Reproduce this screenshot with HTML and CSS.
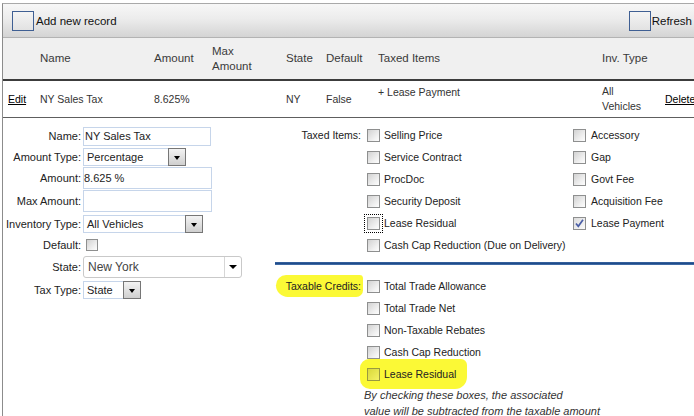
FILE: index.html
```html
<!DOCTYPE html>
<html>
<head>
<meta charset="utf-8">
<title>Taxes</title>
<link rel="stylesheet" href="styles.css">
</head>
<body>
<div class="frame">
  <div class="toolbar">
    <div class="tool"><span class="tool-icon"></span><span class="tool-text">Add new record</span></div>
    <div class="tool tool-right"><span class="tool-icon"></span><span class="tool-text">Refresh</span></div>
  </div>

  <div class="row head">
    <div></div>
    <div>Name</div>
    <div>Amount</div>
    <div>Max<br>Amount</div>
    <div>State</div>
    <div>Default</div>
    <div>Taxed Items</div>
    <div>Inv. Type</div>
    <div></div>
  </div>

  <div class="row data">
    <div class="cell-edit"><a class="link">Edit</a></div>
    <div>NY Sales Tax</div>
    <div>8.625%</div>
    <div></div>
    <div>NY</div>
    <div>False</div>
    <div class="cell-top">+ Lease Payment</div>
    <div>All<br>Vehicles</div>
    <div><a class="link">Delete</a></div>
  </div>

  <div class="form">
    <div class="left">
      <div class="f-label r1">Name:</div>
      <div class="f-field r1"><div class="input in-name">NY Sales Tax</div></div>

      <div class="f-label r2">Amount Type:</div>
      <div class="f-field r2"><div class="select sel-amt"><span class="select-text">Percentage</span><span class="select-btn"><span class="arrow"></span></span></div></div>

      <div class="f-label r3">Amount:</div>
      <div class="f-field r3"><div class="input in-wide in-flush">8.625 %</div></div>

      <div class="f-label r4">Max Amount:</div>
      <div class="f-field r4"><div class="input in-wide"></div></div>

      <div class="f-label r5">Inventory Type:</div>
      <div class="f-field r5"><div class="select sel-inv"><span class="select-text">All Vehicles</span><span class="select-btn"><span class="arrow"></span></span></div></div>

      <div class="f-label r6">Default:</div>
      <div class="f-field r6"><span class="cb cb-default"></span></div>

      <div class="f-label r7">State:</div>
      <div class="f-field r7"><div class="combo"><span class="combo-text">New York</span><span class="combo-btn"><span class="arrow arrow-lg"></span></span></div></div>

      <div class="f-label r8">Tax Type:</div>
      <div class="f-field r8"><div class="select sel-tax"><span class="select-text">State</span><span class="select-btn"><span class="arrow"></span></span></div></div>
    </div>

    <div class="right">
      <div class="section taxed">
        <div class="sec-label">Taxed Items:</div>
        <div class="checks">
          <div class="check"><span class="cb"></span><span>Selling Price</span></div>
          <div class="check"><span class="cb"></span><span>Service Contract</span></div>
          <div class="check"><span class="cb"></span><span>ProcDoc</span></div>
          <div class="check"><span class="cb"></span><span>Security Deposit</span></div>
          <div class="check"><span class="cb cb-focus"></span><span>Lease Residual</span></div>
          <div class="check"><span class="cb"></span><span>Cash Cap Reduction (Due on Delivery)</span></div>
        </div>
        <div class="checks checks-2">
          <div class="check"><span class="cb"></span><span>Accessory</span></div>
          <div class="check"><span class="cb"></span><span>Gap</span></div>
          <div class="check"><span class="cb"></span><span>Govt Fee</span></div>
          <div class="check"><span class="cb"></span><span>Acquisition Fee</span></div>
          <div class="check"><span class="cb cb-checked"><svg width="11" height="11" viewBox="0 0 11 11"><path d="M2 5.5 L4.3 8.3 L9 1.8" fill="none" stroke="#4a5ea6" stroke-width="1.7"/></svg></span><span>Lease Payment</span></div>
        </div>
      </div>

      <div class="divider"></div>

      <div class="section credits">
        <div class="sec-label"><span class="hl-label">Taxable Credits:</span></div>
        <div class="checks">
          <div class="check"><span class="cb"></span><span>Total Trade Allowance</span></div>
          <div class="check"><span class="cb"></span><span>Total Trade Net</span></div>
          <div class="check"><span class="cb"></span><span>Non-Taxable Rebates</span></div>
          <div class="check"><span class="cb"></span><span>Cash Cap Reduction</span></div>
          <div class="check hl-check"><span class="cb cb-hl"></span><span>Lease Residual</span></div>
          <div class="note">By checking these boxes, the associated<br>value will be subtracted from the taxable amount</div>
        </div>
      </div>
    </div>
  </div>
</div>
</body>
</html>
```

FILE: styles.css
```css
html, body {
  margin: 0;
  padding: 0;
  background: #fff;
}

body {
  width: 694px;
  height: 416px;
  overflow: hidden;
  font-family: "Liberation Sans", Arial, sans-serif;
  color: #222;
}

.frame {
  margin: 3px 0 0 2px;
  border-top: 1px solid #a9a9a9;
  border-left: 1px solid #8c8c8c;
  height: 413px;
  box-sizing: border-box;
}

/* toolbar */
.toolbar {
  height: 33px;
  border-bottom: 1px solid #b3b3b3;
  background: linear-gradient(#f7f7f7, #ececec 45%, #d4d4d4);
  display: flex;
  justify-content: space-between;
  align-items: center;
  padding: 0 2px 0 9px;
}

.tool {
  display: flex;
  align-items: center;
  gap: 2px;
}

.tool-right {
  gap: 1px;
}

.tool-icon {
  width: 20px;
  height: 18px;
  border: 1px solid #3f5f93;
  background: linear-gradient(#f4f4f4, #e2e2e2);
}

.tool-text {
  font-size: 11.5px;
  color: #111;
}

/* grid rows */
.row {
  display: grid;
  grid-template-columns: 37px 114px 58px 74px 40px 52px 224px 63px 1fr;
  align-items: center;
}

.head {
  height: 41px;
  background: #f0f0f0;
  border-bottom: 2px solid #3c3c3c;
  font-size: 11.5px;
  line-height: 15px;
  color: #3a3a3a;
}

.data {
  height: 36px;
  border-bottom: 1px solid #5e5e5e;
  font-size: 10.5px;
  line-height: 15px;
  color: #333;
}

.cell-edit {
  padding-left: 5px;
}

.cell-top {
  align-self: start;
  padding-top: 4px;
}

.link {
  color: #000;
  text-decoration: underline;
}

/* form */
.form {
  display: flex;
  font-size: 10.5px;
  color: #222;
}

.left {
  width: 272px;
  padding-top: 8px;
  display: grid;
  grid-template-columns: 78px 1fr;
  column-gap: 2px;
  grid-template-rows: 20px 21px 22px 24px 22px 20px 24px 22px;
  align-items: center;
}

.f-label {
  text-align: right;
  font-size: 11px;
}

.f-field {
  display: flex;
  align-items: center;
}

.input {
  box-sizing: border-box;
  border: 1px solid #c6d5ea;
  background: #fff;
  padding-left: 1px;
  display: flex;
  align-items: center;
  color: #222;
  font-size: 11px;
}

.in-name {
  width: 128px;
  height: 19px;
}

.in-wide {
  width: 129px;
  height: 22px;
}

.in-flush {
  padding-left: 0;
}

.select {
  display: flex;
  height: 18px;
  box-sizing: border-box;
  font-size: 11px;
}

.sel-amt { width: 103px; }
.sel-inv { width: 120px; }
.sel-tax { width: 58px; }

.select-text {
  flex: 1;
  box-sizing: border-box;
  border: 1px solid #c6d5ea;
  border-right: 0;
  padding-left: 3px;
  line-height: 16px;
  color: #222;
}

.select-btn {
  width: 18px;
  box-sizing: border-box;
  border: 1px solid #767676;
  background: linear-gradient(#f3f3f3, #cfcfcf);
  display: flex;
  align-items: center;
  justify-content: center;
}

.arrow {
  width: 0;
  height: 0;
  border-left: 3.5px solid transparent;
  border-right: 3.5px solid transparent;
  border-top: 4px solid #000;
  margin-top: 2px;
}

.arrow-lg {
  border-left-width: 4px;
  border-right-width: 4px;
  margin-top: 0;
}

.combo {
  width: 159px;
  height: 22px;
  box-sizing: border-box;
  border: 1px solid #c9c9c9;
  border-radius: 3px;
  display: flex;
  align-items: stretch;
}

.combo-text {
  flex: 1;
  font-size: 12px;
  color: #444;
  padding-left: 4px;
  display: flex;
  align-items: center;
}

.combo-btn {
  width: 16px;
  border-left: 1px solid #d6d6d6;
  display: flex;
  align-items: center;
  justify-content: center;
}

/* checkboxes */
.cb {
  display: inline-flex;
  align-items: center;
  justify-content: center;
  width: 13px;
  height: 13px;
  box-sizing: border-box;
  border: 1px solid #8e8f8f;
  background: linear-gradient(135deg, #d2d2d2, #f2f2f2 70%, #fdfdfd);
  flex: none;
}

.cb-default {
  width: 12px;
  height: 12px;
  margin-left: 3px;
}

.cb-focus {
  outline: 1px dotted #000;
  outline-offset: 2px;
}

.cb-checked {
  background: linear-gradient(135deg, #dcdcdc, #fafafa);
}

.cb-hl {
  border-color: #9a9a40;
  background: linear-gradient(135deg, #d9d93a, #f4f266);
}

/* right side */
.right {
  width: 419px;
  padding-top: 6px;
}

.section {
  display: grid;
  grid-template-columns: 92px 206px 1fr;
  align-items: start;
}

.sec-label {
  height: 22px;
  padding-right: 6px;
  display: flex;
  justify-content: flex-end;
  align-items: center;
}

.checks {
  display: flex;
  flex-direction: column;
}

.check {
  height: 22px;
  display: flex;
  align-items: center;
  gap: 4px;
  white-space: nowrap;
}

.checks-2 .check {
  gap: 5px;
}

.divider {
  margin-top: 6px;
  height: 3px;
  background: linear-gradient(#3d67a3, #1f4c8a 50%, #5079b2);
}

.credits {
  padding-top: 10px;
}

.hl-label {
  background: #fbf936;
  padding: 5px 2px 5px 10px;
  margin-right: -2px;
  border-radius: 12px 4px 8px 14px;
}

.hl-check {
  align-self: flex-start;
  background: #fbf936;
  padding: 4px 11px 4px 7px;
  margin: 0 0 0 -7px;
  border-radius: 9px 6px 12px 10px;
  height: 22px;
  box-sizing: content-box;
  margin-top: -4px;
  margin-bottom: -4px;
}

.note {
  margin: 2px 0 0 -3px;
  font-style: italic;
  font-size: 11px;
  line-height: 16px;
  color: #333;
  white-space: nowrap;
}
```
